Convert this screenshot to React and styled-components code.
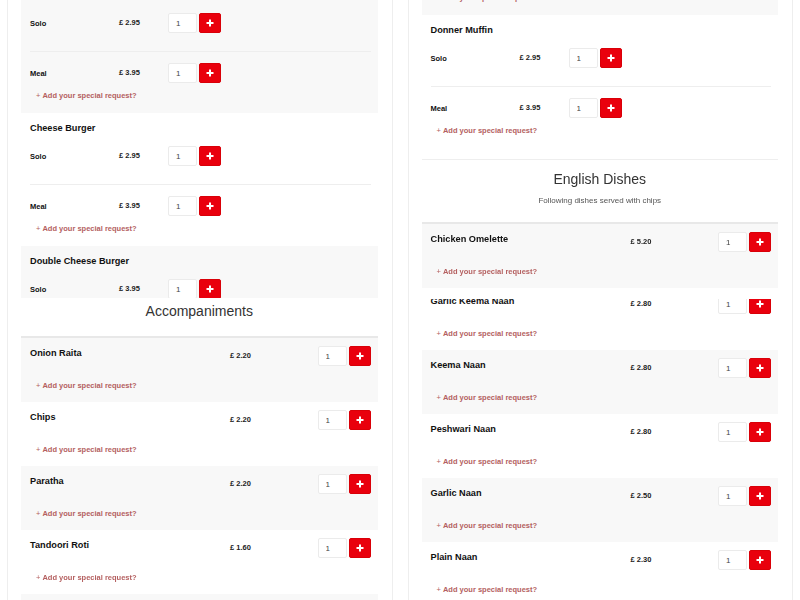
import { useLayoutEffect, useRef } from "react";
import styled, { createGlobalStyle } from "styled-components";

const GlobalStyle = createGlobalStyle`
  html, body {
    margin: 0;
    padding: 0;
    background: #fff;
  }
  body {
    font-family: "Liberation Sans", Arial, sans-serif;
    color: #222;
    overflow: hidden;
  }
`;

const Page = styled.div`
  display: grid;
  grid-template-columns: 1fr 1fr;
  gap: 15px;
  padding: 0 7px;
  height: 600px;
  overflow: hidden;
`;

const Card = styled.div`
  border: 1px solid #eeeeee;
  border-top: 0;
  padding: 0 14px 0 13px;
  background: #fff;
`;

const Scroller = styled.div`
  height: ${(p) => p.$height}px;
  margin-top: ${(p) => p.$before || 0}px;
  margin-bottom: ${(p) => p.$after || 0}px;
  overflow-y: auto;
  scrollbar-width: none;
  &::-webkit-scrollbar {
    display: none;
  }
`;

const Section = styled.section`
  border-top: ${(p) => (p.$ruled ? "1px solid #eeeeee" : "0")};
  padding-top: ${(p) => p.$top}px;
`;

const SectionHead = styled.div`
  text-align: center;
  padding-bottom: 15px;
  border-bottom: 2px solid #e8e8e8;
`;

const Heading = styled.h3`
  margin: 0;
  font-size: 14px;
  line-height: 20px;
  font-weight: 400;
  color: #333;
`;

const Note = styled.p`
  margin: 6px 0 0;
  font-size: 8px;
  line-height: 12px;
  color: #555;
`;

const Product = styled.div`
  background: ${(p) => (p.$shade ? "#f8f8f8" : "#fff")};
  padding: ${(p) => (p.$variants ? "8px 7px 11px 9px" : "8px 7px 10px 9px")};
`;

const Title = styled.div`
  font-size: 9.2px;
  line-height: 14px;
  font-weight: 700;
  color: #111;
`;

const SingleRow = styled.div`
  display: grid;
  grid-template-columns: 200px 1fr auto;
  align-items: start;
`;

const VariantRow = styled.div`
  display: grid;
  grid-template-columns: 89px 49px auto;
  align-items: center;
  padding-top: 11px;
  &:not(:last-child) {
    padding-bottom: 18px;
    border-bottom: 1px solid #eeeeee;
  }
`;

const Label = styled.span`
  font-size: 7.5px;
  font-weight: 700;
  color: #111;
`;

const Price = styled.span`
  font-size: 7.5px;
  line-height: 20px;
  font-weight: 700;
  color: #222;
`;

const Qty = styled.div`
  display: flex;
  gap: 2px;
`;

const QtyInput = styled.input`
  box-sizing: border-box;
  width: 29px;
  height: 20px;
  margin: 0;
  padding: 0 0 0 7px;
  border: 1px solid #ebebeb;
  border-radius: 2px;
  background: #fff;
  font-family: inherit;
  font-size: 8px;
  color: #444;
  outline: none;
`;

const AddButton = styled.button`
  box-sizing: border-box;
  width: 22px;
  height: 20px;
  padding: 0;
  border: 1px solid #d90008;
  border-radius: 2px;
  background: #e9000d;
  display: flex;
  align-items: center;
  justify-content: center;
  cursor: pointer;
`;

const Request = styled.a`
  display: block;
  margin-top: ${(p) => p.$top}px;
  padding-left: 6px;
  font-size: 7.5px;
  line-height: 12px;
  font-weight: 700;
  color: #b45f5f;
  text-decoration: none;
  cursor: pointer;

  span {
    font-weight: 400;
    margin-right: 2px;
  }
`;

const PlusIcon = () => (
  <svg width="8" height="8" viewBox="0 0 8 8">
    <path d="M4 0.5v7M0.5 4h7" stroke="#fff" strokeWidth="2" />
  </svg>
);

const QtyControl = () => (
  <Qty>
    <QtyInput defaultValue="1" />
    <AddButton>
      <PlusIcon />
    </AddButton>
  </Qty>
);

const ScrollBox = ({ skip, children, ...rest }) => {
  const ref = useRef(null);
  useLayoutEffect(() => {
    if (ref.current) ref.current.scrollTop = skip;
  }, [skip]);
  return (
    <Scroller ref={ref} {...rest}>
      {children}
    </Scroller>
  );
};

const MenuItem = ({ item, shade }) => {
  if (item.variants) {
    return (
      <Product $shade={shade} $variants>
        <Title>{item.name}</Title>
        <div>
          {item.variants.map((v) => (
            <VariantRow key={v.name}>
              <Label>{v.name}</Label>
              <Price>£ {v.price}</Price>
              <QtyControl />
            </VariantRow>
          ))}
        </div>
        <Request $top={7}>
          <span>+</span>Add your special request?
        </Request>
      </Product>
    );
  }
  return (
    <Product $shade={shade}>
      <SingleRow>
        <Title>{item.name}</Title>
        <Price>£ {item.price}</Price>
        <QtyControl />
      </SingleRow>
      <Request $top={14}>
        <span>+</span>Add your special request?
      </Request>
    </Product>
  );
};

const ItemList = ({ items, first = 0 }) =>
  items.map((item, i) => (
    <MenuItem key={item.name} item={item} shade={(i + first) % 2 === 0} />
  ));

const burgers = [
  { name: "Chicken Burger", variants: [{ name: "Solo", price: "2.95" }, { name: "Meal", price: "3.95" }] },
  { name: "Cheese Burger", variants: [{ name: "Solo", price: "2.95" }, { name: "Meal", price: "3.95" }] },
  { name: "Double Cheese Burger", variants: [{ name: "Solo", price: "3.95" }, { name: "Meal", price: "4.95" }] },
];

const accompaniments = [
  { name: "Onion Raita", price: "2.20" },
  { name: "Chips", price: "2.20" },
  { name: "Paratha", price: "2.20" },
  { name: "Tandoori Roti", price: "1.60" },
  { name: "Plain Rice", price: "2.50" },
  { name: "Pilau Rice", price: "2.80" },
];

const muffins = [
  { name: "Chicken Muffin", variants: [{ name: "Solo", price: "2.95" }, { name: "Meal", price: "3.95" }] },
  { name: "Donner Muffin", variants: [{ name: "Solo", price: "2.95" }, { name: "Meal", price: "3.95" }] },
];

const english = [{ name: "Chicken Omelette", price: "5.20" }];

const breads = [
  { name: "Garlic Keema Naan", price: "2.80" },
  { name: "Keema Naan", price: "2.80" },
  { name: "Peshwari Naan", price: "2.80" },
  { name: "Garlic Naan", price: "2.50" },
  { name: "Plain Naan", price: "2.30" },
  { name: "Chapati", price: "1.20" },
];

export default function App() {
  return (
    <>
      <GlobalStyle />
      <Page>
        <Card>
          <ScrollBox $height={298} skip={20}>
            <ItemList items={burgers} />
          </ScrollBox>
          <Section $top={3}>
            <SectionHead>
              <Heading>Accompaniments</Heading>
            </SectionHead>
            <ItemList items={accompaniments} />
          </Section>
        </Card>

        <Card>
          <ScrollBox $height={148} $after={11} skip={118}>
            <ItemList items={muffins} />
          </ScrollBox>
          <Section $ruled $top={9}>
            <SectionHead>
              <Heading>English Dishes</Heading>
              <Note>Following dishes served with chips</Note>
            </SectionHead>
            <ItemList items={english} />
            <ScrollBox $height={330} $before={11} skip={13}>
              <ItemList items={breads} first={1} />
            </ScrollBox>
          </Section>
        </Card>
      </Page>
    </>
  );
}
